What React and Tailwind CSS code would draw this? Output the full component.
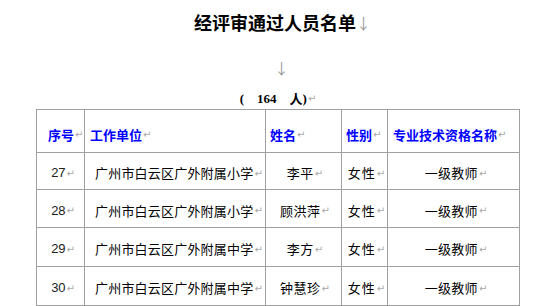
import React from "react";

const CJK = "font-[family-name:'Noto_Sans_CJK_SC','Noto_Sans',sans-serif]";
const LAT = "font-[family-name:'Liberation_Sans',Arial,sans-serif]";
const SERIF = "font-[family-name:'Liberation_Serif','Noto_Sans_CJK_SC',serif]";

function Ret() {
  return (
    <span className="text-[10px] text-[#a8a8a8] leading-none ml-[1px] relative top-[1px] font-[family-name:'DejaVu_Sans',sans-serif]">
      ↵
    </span>
  );
}

const headers = [
  { t: "序号", cls: "pl-[11px]" },
  { t: "工作单位", cls: "pl-[5px]" },
  { t: "姓名", cls: "pl-[4px]" },
  { t: "性别", cls: "pl-[4px]" },
  { t: "专业技术资格名称", cls: "pl-[5px]" },
];

const rows = [
  { n: "27", u: "广州市白云区广外附属小学", name: "李平", h: "h-[37px]" },
  { n: "28", u: "广州市白云区广外附属小学", name: "顾洪萍", h: "h-[38px]" },
  { n: "29", u: "广州市白云区广外附属中学", name: "李方", h: "h-[39px]" },
  { n: "30", u: "广州市白云区广外附属中学", name: "钟慧珍", h: "h-[39px]" },
];

const cell = "border-r border-b border-[#a0a0a0] flex items-center";

export default function App() {
  return (
    <div className="w-[553px] h-[306px] bg-white overflow-hidden text-black">
      <div className="h-[44px] flex items-center justify-center pl-[12px]">
        <span className={`text-[18px] font-bold leading-none ${CJK}`}>经评审通过人员名单</span>
        <span className={`text-[15px] text-[#9a9a9a] leading-none ${CJK}`}>↓</span>
      </div>
      <div className="h-[47px] flex items-center justify-center pl-[10px]">
        <span className={`text-[15px] text-[#9a9a9a] leading-none ${CJK}`}>↓</span>
      </div>
      <div className="h-[14px] flex items-center justify-center pl-[3px]">
        <span className={`text-[13px] font-bold leading-none whitespace-pre ${SERIF}`}>{"(    164    "}</span>
        <span className={`text-[13px] font-bold leading-none ${CJK}`}>人</span>
        <span className={`text-[13px] font-bold leading-none ${SERIF}`}>)</span>
        <Ret />
      </div>
      <div className="h-[4px]" />
      <div className="ml-[36px] w-[484px] border-l border-t border-[#a0a0a0] grid grid-cols-[48px_181px_76px_46px_132px]">
        {headers.map((h) => (
          <div key={h.t} className={`${cell} h-[43px] pt-[6px] ${h.cls}`}>
            <span className={`text-[13px] font-bold text-[#0000ff] leading-none ${CJK}`}>{h.t}</span>
            <Ret />
          </div>
        ))}
        {rows.map((r) => (
          <React.Fragment key={r.n}>
            <div className={`${cell} ${r.h} justify-end pr-[9px] pt-[3px]`}>
              <span className={`text-[13px] text-[#222] leading-none ${LAT}`}>{r.n}</span>
              <Ret />
            </div>
            <div className={`${cell} ${r.h} pl-[10px] pt-[3px]`}>
              <span className={`text-[13px] leading-none tracking-[0.2px] ${CJK}`}>{r.u}</span>
              <Ret />
            </div>
            <div className={`${cell} ${r.h} justify-center pl-[3px] pt-[3px]`}>
              <span className={`text-[13px] leading-none tracking-[0.5px] ${CJK}`}>{r.name}</span>
              <Ret />
            </div>
            <div className={`${cell} ${r.h} justify-center pl-[4px] pt-[3px]`}>
              <span className={`text-[13px] leading-none tracking-[1px] ${CJK}`}>女性</span>
              <Ret />
            </div>
            <div className={`${cell} ${r.h} justify-center pl-[5px] pt-[3px]`}>
              <span className={`text-[13px] leading-none tracking-[0.3px] ${CJK}`}>一级教师</span>
              <Ret />
            </div>
          </React.Fragment>
        ))}
        <div className={`${cell} h-[39px]`} />
        <div className={`${cell} h-[39px]`} />
        <div className={`${cell} h-[39px]`} />
        <div className={`${cell} h-[39px]`} />
        <div className={`${cell} h-[39px]`} />
      </div>
    </div>
  );
}
